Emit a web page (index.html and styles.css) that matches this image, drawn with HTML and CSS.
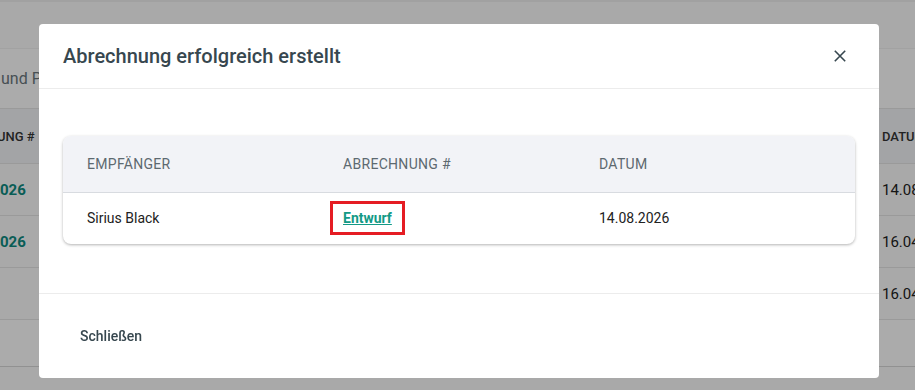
FILE: index.html
```html
<!DOCTYPE html>
<html lang="de">
  <head>
    <meta charset="UTF-8" />
    <meta name="viewport" content="width=device-width, initial-scale=1.0" />
    <title>Abrechnung</title>
    <link rel="stylesheet" href="styles.css">
  </head>
  <body>
    <!-- page behind the dialog -->
    <div class="page">
      <div class="page-top"></div>
      <div class="page-section">
        <span class="section-title">und Positionen</span>
      </div>
      <div class="page-table">
        <div class="page-row page-head">
          <span class="cell-left">UNG #</span>
          <span class="cell-right">DATUM</span>
        </div>
        <div class="page-row">
          <span class="cell-left num">026</span>
          <span class="cell-right">14.08.2026</span>
        </div>
        <div class="page-row">
          <span class="cell-left num">026</span>
          <span class="cell-right">16.04.2026</span>
        </div>
        <div class="page-row">
          <span class="cell-left"></span>
          <span class="cell-right">16.04.2026</span>
        </div>
        <div class="page-row page-foot"></div>
      </div>
    </div>

    <div class="overlay">
      <div class="dialog">
        <div class="dialog-header">
          <h2>Abrechnung erfolgreich erstellt</h2>
          <button class="close-btn" aria-label="Schließen">
            <svg width="14" height="14" viewBox="0 0 14 14">
              <path d="M1.8 1.8 L12.2 12.2 M12.2 1.8 L1.8 12.2" stroke="#37474f" stroke-width="1.6" fill="none" />
            </svg>
          </button>
        </div>

        <div class="dialog-body">
          <div class="result-card">
            <table>
              <thead>
                <tr>
                  <th>Empfänger</th>
                  <th>Abrechnung #</th>
                  <th>Datum</th>
                </tr>
              </thead>
              <tbody>
                <tr>
                  <td>Sirius Black</td>
                  <td><span class="highlight"><a href="#" class="draft-link">Entwurf</a></span></td>
                  <td>14.08.2026</td>
                </tr>
              </tbody>
            </table>
          </div>
        </div>

        <div class="dialog-footer">
          <button class="text-btn">Schließen</button>
        </div>
      </div>
    </div>
  </body>
</html>
```

FILE: styles.css
```css
* {
  margin: 0;
  padding: 0;
  box-sizing: border-box;
  font-family: Roboto, "Liberation Sans", sans-serif;
}

body {
  width: 915px;
  height: 390px;
  overflow: hidden;
  background-color: #ffffff;
}

/* page behind the overlay */

.page {
  height: 390px;
  background-color: #fdfdfd;
}

.page-top {
  height: 48px;
  border-top: 2px solid #f0f0f0;
}

.page-section {
  height: 60px;
  display: flex;
  align-items: center;
  background-color: #ffffff;
  border-top: 1px solid #f2f2f2;
}

.section-title {
  padding-left: 1px;
  font-size: 16px;
  color: #6b777d;
}

.page-row {
  height: 52px;
  display: flex;
  justify-content: space-between;
  align-items: center;
  border-bottom: 1px solid #e6e6e6;
  font-size: 15px;
  color: #222;
}

.page-head {
  height: 56px;
  background-color: #f4f5f8;
  font-size: 13px;
  font-weight: 500;
  color: #333;
  border-top: 1px solid #e6e6e6;
}

.page-foot {
  height: 47px;
  background-color: #ffffff;
  border-bottom: 1px solid #d8d8d8;
}

.cell-left {
  text-indent: -3px;
}

.cell-left.num {
  text-indent: 0;
  font-weight: 700;
  color: #0d8b80;
}

.cell-right {
  width: 33px;
  white-space: nowrap;
  overflow: hidden;
}

/* dialog */

.overlay {
  position: fixed;
  inset: 0;
  background-color: rgba(0, 0, 0, 0.33);
}

.dialog {
  width: 840px;
  height: 354px;
  margin: 24px 0 0 39px;
  background-color: #ffffff;
  border-radius: 4px;
  display: flex;
  flex-direction: column;
}

.dialog-header {
  height: 65px;
  padding: 0 24px;
  display: flex;
  justify-content: space-between;
  align-items: center;
  border-bottom: 1px solid #ececec;
}

.dialog-header h2 {
  font-size: 20px;
  font-weight: 500;
  color: #37474f;
  padding-bottom: 1px;
}

.close-btn {
  width: 24px;
  height: 24px;
  margin-right: 3px;
  border: none;
  background: none;
  display: flex;
  align-items: center;
  justify-content: center;
  cursor: pointer;
}

.dialog-body {
  padding: 47px 24px 49px;
  border-bottom: 1px solid #ececec;
}

.result-card {
  border-radius: 8px;
  overflow: hidden;
  box-shadow: 0 1px 3px rgba(0, 0, 0, 0.3);
}

table {
  width: 100%;
  border-collapse: collapse;
}

th,
td {
  padding: 0 24px;
  text-align: left;
  font-size: 14px;
}

th {
  height: 56px;
  width: 256px;
  font-weight: 400;
  text-transform: uppercase;
  letter-spacing: 0.3px;
  color: #5d6970;
  background-color: #f2f3f7;
  border-bottom: 1px solid #d8dbe0;
}

th:last-child {
  width: auto;
}

td {
  height: 52px;
  color: #222;
}

.highlight {
  margin-left: -13px;
  padding: 6px 10px;
  border: 3px solid #e51c23;
}

.draft-link {
  font-weight: 700;
  color: #139a86;
  text-decoration: underline;
}

.dialog-footer {
  flex: 1;
  display: flex;
  align-items: center;
  padding: 0 24px;
}

.text-btn {
  padding: 8px 17px;
  border: none;
  background: none;
  font-size: 14px;
  font-weight: 500;
  color: #37474f;
  cursor: pointer;
}
```
